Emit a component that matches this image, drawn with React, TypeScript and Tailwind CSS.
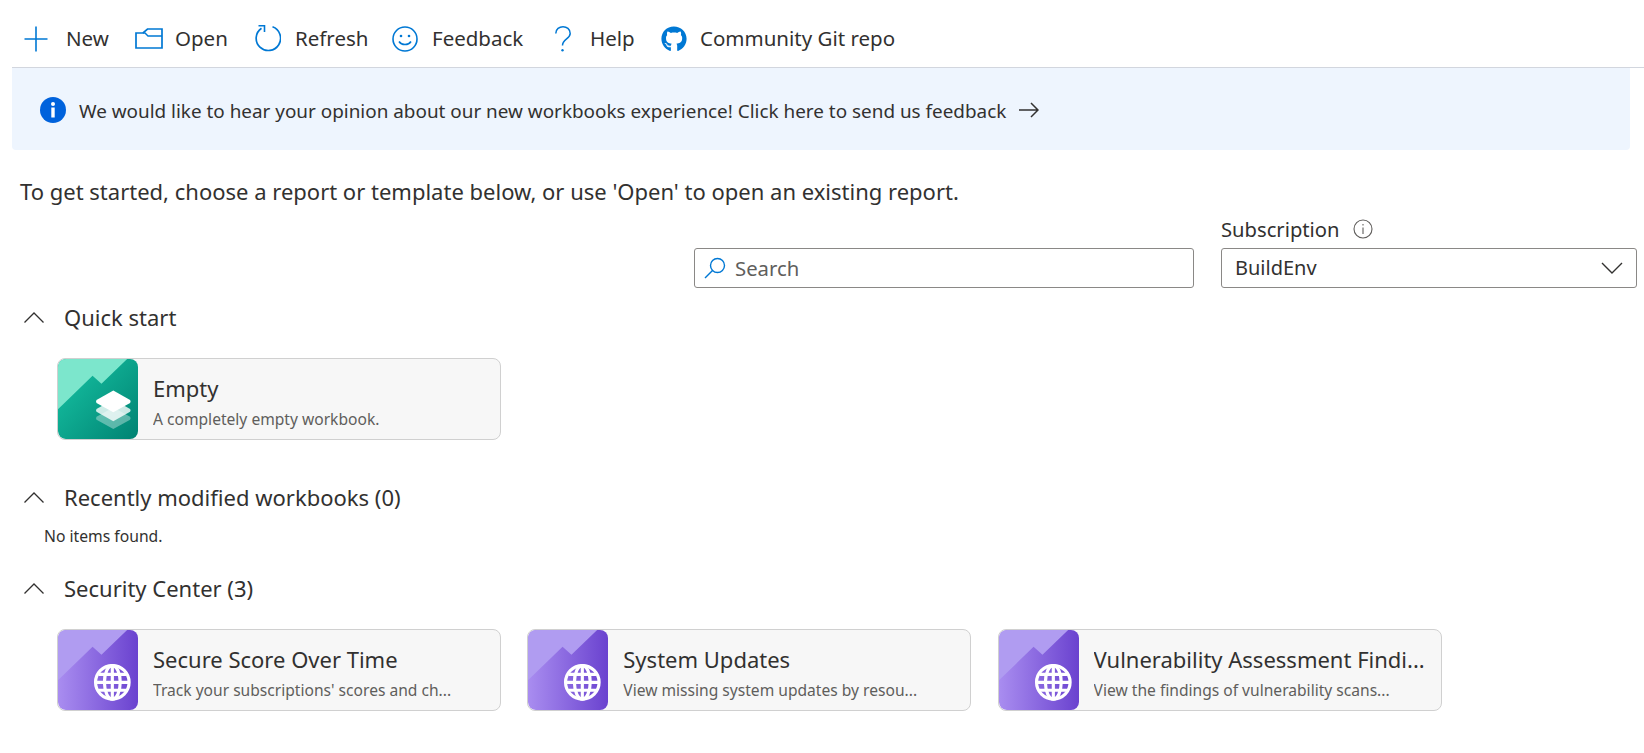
import { FaGithub } from 'react-icons/fa';

const font = { fontFamily: '"Noto Sans", sans-serif' };

function NewIcon() {
    return (
        <svg width="24" height="26" viewBox="0 0 24 26" fill="none" stroke="#0078d4" strokeWidth="1.6">
            <path d="M12 0.500V25.500M0.500 13H23.500" />
        </svg>
    );
}

function OpenIcon() {
    return (
        <svg width="28" height="21" viewBox="0 0 28 21" fill="none" stroke="#0078d4" strokeWidth="1.7">
            <path d="M1 5V20H27V1H12.500L8 5H1Z" />
            <path d="M8 5H10L13 8H27" strokeWidth="1.4" />
        </svg>
    );
}

function RefreshIcon() {
    return (
        <svg width="26" height="27" viewBox="0 0 26 27" fill="none" stroke="#0078d4" strokeWidth="1.7">
            <path d="M17.500 1.800A12.200 12.200 0 1 1 6.500 3.200" />
            <path d="M3.500 0.800H9.500V7" strokeWidth="1.600" />
        </svg>
    );
}

function SmileIcon() {
    return (
        <svg width="26" height="26" viewBox="0 0 26 26" fill="none" stroke="#0078d4" strokeWidth="1.6">
            <circle cx="13" cy="13" r="12" />
            <path d="M7 15.500C9.500 19.500 16.500 19.500 19 15.500" />
            <circle cx="9" cy="10" r="1.300" fill="#0078d4" stroke="none" />
            <circle cx="17" cy="10" r="1.300" fill="#0078d4" stroke="none" />
        </svg>
    );
}

function HelpIcon() {
    return (
        <svg width="16" height="26" viewBox="0 0 16 26" fill="none" stroke="#0078d4" strokeWidth="1.5">
            <path d="M0.800 7.500C0.800 -1.500 15.200 -1.500 15.200 7.500C15.200 13 7.500 13 7.500 19.500" />
            <circle cx="7.500" cy="24.300" r="1.200" fill="#0078d4" stroke="none" />
        </svg>
    );
}

function Chevron() {
    return (
        <svg width="20" height="11" viewBox="0 0 20 11" fill="none" stroke="#323130" strokeWidth="1.3">
            <path d="M0.500 10.500L10 1L19.500 10.500" />
        </svg>
    );
}

function EmptyArt() {
    return (
        <svg width="80" height="80" viewBox="0 0 81 81" preserveAspectRatio="none" className="shrink-0 rounded-lg">
            <defs>
                <linearGradient id="greenBg" x1="0.1" y1="0.2" x2="1" y2="1">
                    <stop offset="0" stopColor="#14bc9e" />
                    <stop offset="1" stopColor="#008272" />
                </linearGradient>
            </defs>
            <rect width="81" height="81" fill="url(#greenBg)" />
            <path d="M0 0H70L44 25L35 17L0 51Z" fill="#7ce6cc" />
            <path d="M56 49L73 58.500Q74 60 73 61.500L56 71L39 61.500Q38 60 39 58.500Z" fill="#ffffff" opacity="0.35" />
            <path d="M56 41L73 50.500Q74 52 73 53.500L56 63L39 53.500Q38 52 39 50.500Z" fill="#ffffff" opacity="0.8" />
            <path d="M56 32L73 41.500Q74 43 73 44.500L56 54L39 44.500Q38 43 39 41.500Z" fill="#ffffff" />
        </svg>
    );
}

function GlobeArt({ id }: { id: string }) {
    return (
        <svg width="80" height="80" viewBox="0 0 81 81" preserveAspectRatio="none" className="shrink-0 rounded-lg">
            <defs>
                <linearGradient id={id} x1="0" y1="0" x2="1" y2="0">
                    <stop offset="0" stopColor="#a98df0" />
                    <stop offset="1" stopColor="#6a42cf" />
                </linearGradient>
            </defs>
            <rect width="81" height="81" fill={`url(#${id})`} />
            <path d="M0 0H70L44 25L35 17L0 51Z" fill="#b09cf1" />
            <g fill="none" stroke="#ffffff" strokeWidth="3.2">
                <circle cx="55" cy="53" r="17" />
                <ellipse cx="55" cy="53" rx="8" ry="17" />
                <path d="M55 36V70M38 53H72M41 45H69M41 61H69" />
            </g>
        </svg>
    );
}

function Card({ art, title, desc }: { art: React.ReactNode; title: string; desc: string }) {
    return (
        <div className="flex w-[444px] h-[82px] items-center rounded-lg border border-[#d0d0d0] bg-[#f7f7f7] overflow-hidden">
            {art}
            <div className="flex flex-col pl-[15px] pr-[8px] pt-[4px] min-w-0">
                <span className="truncate text-[22px] leading-[28px] text-[#323130]">{title}</span>
                <span className="truncate text-[15.600px] leading-[20px] mt-[7px] text-[#605e5c]">{desc}</span>
            </div>
        </div>
    );
}

function SectionHead({ label }: { label: string }) {
    return (
        <div className="flex items-center h-[28px] pl-[24px] gap-[20px] text-[22px] text-[#323130]">
            <Chevron />
            <span>{label}</span>
        </div>
    );
}

const tools = [
    { icon: <NewIcon />, label: 'New', gap: 'gap-[18px]', width: 'w-[111px]' },
    { icon: <OpenIcon />, label: 'Open', gap: 'gap-[12px]', width: 'w-[120px]' },
    { icon: <RefreshIcon />, label: 'Refresh', gap: 'gap-[14px]', width: 'w-[137px]' },
    { icon: <SmileIcon />, label: 'Feedback', gap: 'gap-[14px]', width: 'w-[163px]' },
    { icon: <HelpIcon />, label: 'Help', gap: 'gap-[19px]', width: 'w-[106px]' },
    { icon: <FaGithub size={26} color="#0078d4" />, label: 'Community Git repo', gap: 'gap-[13px]', width: 'w-auto' },
];

export default function App() {
    return (
        <div className="w-[1644px] h-[753px] bg-white overflow-hidden" style={font}>
            <div className="flex items-center h-[68px] ml-[12px] pl-[12px] pt-[10px] border-b border-[#d2d6de] text-[20.500px] text-[#323130]">
                {tools.map(t => (
                    <div key={t.label} className={`flex items-center ${t.gap} ${t.width}`}>
                        {t.icon}
                        <span>{t.label}</span>
                    </div>
                ))}
            </div>

            <div className="flex items-center h-[82px] mr-[14px] ml-[12px] pl-[28px] pt-[2px] bg-[#eef5fe] rounded-b-sm text-[18.900px] text-[#323130]">
                <svg width="26" height="26" viewBox="0 0 26 26" className="shrink-0">
                    <circle cx="13" cy="13" r="13" fill="#0062dc" />
                    <circle cx="13" cy="7" r="2" fill="#ffffff" />
                    <rect x="11.300" y="10.500" width="3.400" height="10" fill="#ffffff" />
                </svg>
                <span className="ml-[13px] pt-[2px]">We would like to hear your opinion about our new workbooks experience! Click here to send us feedback</span>
                <svg width="20" height="16" viewBox="0 0 20 16" fill="none" stroke="#323130" strokeWidth="1.500" className="ml-[13px]">
                    <path d="M0 8H19M12 1L19 8L12 15" />
                </svg>
            </div>

            <div className="pl-[20px] mt-[27px] text-[22px] leading-[28px] text-[#323130]">
                To get started, choose a report or template below, or use 'Open' to open an existing report.
            </div>

            <div className="flex items-end justify-end mt-[10px] pr-[7px] gap-[27px]">
                <div className="flex items-center w-[500px] h-[40px] rounded-[3px] border border-[#8a8886] pl-[9px] gap-[9px]">
                    <svg width="22" height="22" viewBox="0 0 22 22" fill="none" stroke="#0078d4" strokeWidth="1.400">
                        <circle cx="13.500" cy="8.500" r="7" />
                        <path d="M8.500 13.500L1 21" />
                    </svg>
                    <span className="text-[20.300px] text-[#605e5c]">Search</span>
                </div>
                <div className="flex flex-col w-[416px]">
                    <div className="flex items-center h-[28px] mb-[5px] gap-[14px] text-[20.200px] text-[#323130]">
                        <span>Subscription</span>
                        <svg width="20" height="20" viewBox="0 0 20 20" fill="none" stroke="#605e5c" strokeWidth="1.100">
                            <circle cx="10" cy="10" r="9" />
                            <path d="M10 8.500V15M10 5V6.500" />
                        </svg>
                    </div>
                    <div className="flex items-center justify-between h-[40px] rounded-[3px] border border-[#8a8886] pl-[13px] pr-[13px]">
                        <span className="text-[20px] text-[#323130]">BuildEnv</span>
                        <svg width="22" height="12" viewBox="0 0 22 12" fill="none" stroke="#323130" strokeWidth="1.400">
                            <path d="M1 1L11 11L21 1" />
                        </svg>
                    </div>
                </div>
            </div>

            <div className="mt-[15px]">
                <SectionHead label="Quick start" />
            </div>
            <div className="flex pl-[57px] mt-[27px]">
                <Card art={<EmptyArt />} title="Empty" desc="A completely empty workbook." />
            </div>

            <div className="mt-[43px]">
                <SectionHead label="Recently modified workbooks (0)" />
            </div>
            <div className="pl-[44px] mt-[14px] text-[15.700px] leading-[22px] text-[#323130]">No items found.</div>

            <div className="mt-[27px]">
                <SectionHead label="Security Center (3)" />
            </div>
            <div className="flex pl-[57px] mt-[27px] gap-[26.300px]">
                <Card art={<GlobeArt id="p1" />} title="Secure Score Over Time" desc="Track your subscriptions' scores and ch..." />
                <Card art={<GlobeArt id="p2" />} title="System Updates" desc="View missing system updates by resou..." />
                <Card art={<GlobeArt id="p3" />} title="Vulnerability Assessment Findi..." desc="View the findings of vulnerability scans..." />
            </div>
        </div>
    );
}
